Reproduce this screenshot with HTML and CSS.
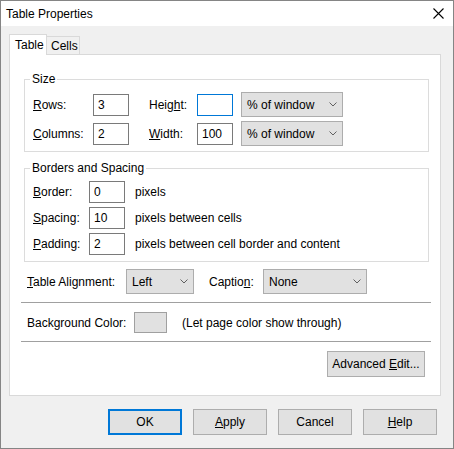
FILE: index.html
```html
<!DOCTYPE html>
<html>
<head>
<meta charset="utf-8">
<link rel="stylesheet" href="styles.css">
</head>
<body>
<div class="window">
  <div class="titlebar">
    <span class="title">Table Properties</span>
    <span class="close"><svg width="11" height="11" viewBox="0 0 11 11"><path d="M0.5 0.5 L10.5 10.5 M10.5 0.5 L0.5 10.5" stroke="#000" stroke-width="1.1" fill="none"/></svg></span>
  </div>
  <div class="body">
    <div class="tabs">
      <div class="tab active">Table</div>
      <div class="tab">Cells</div>
    </div>
    <div class="panel">
      <fieldset class="group g-size">
        <legend>Size</legend>
        <div class="size-row">
          <span class="lbl"><u>R</u>ows:</span>
          <input class="num" value="3">
          <span></span>
          <span class="lbl">Heig<u>h</u>t:</span>
          <input class="num focus" value="">
          <span></span>
          <div class="combo"><span>% of window</span><svg class="chev" width="8" height="5" viewBox="0 0 8 5"><path d="M0.5 0.5 L4 4 L7.5 0.5" stroke="#606060" fill="none"/></svg></div>
        </div>
        <div class="size-row">
          <span class="lbl"><u>C</u>olumns:</span>
          <input class="num" value="2">
          <span></span>
          <span class="lbl"><u>W</u>idth:</span>
          <input class="num" value="100">
          <span></span>
          <div class="combo"><span>% of window</span><svg class="chev" width="8" height="5" viewBox="0 0 8 5"><path d="M0.5 0.5 L4 4 L7.5 0.5" stroke="#606060" fill="none"/></svg></div>
        </div>
      </fieldset>
      <fieldset class="group g-borders">
        <legend>Borders and Spacing</legend>
        <div class="b-row">
          <span class="lbl"><u>B</u>order:</span>
          <input class="num" value="0">
          <span class="desc">pixels</span>
        </div>
        <div class="b-row">
          <span class="lbl"><u>S</u>pacing:</span>
          <input class="num" value="10">
          <span class="desc">pixels between cells</span>
        </div>
        <div class="b-row">
          <span class="lbl"><u>P</u>adding:</span>
          <input class="num" value="2">
          <span class="desc">pixels between cell border and content</span>
        </div>
      </fieldset>
      <div class="align-row">
        <span class="lbl"><u>T</u>able Alignment:</span>
        <div class="combo"><span>Left</span><svg class="chev" width="8" height="5" viewBox="0 0 8 5"><path d="M0.5 0.5 L4 4 L7.5 0.5" stroke="#606060" fill="none"/></svg></div>
        <span></span>
        <span class="lbl">Captio<u>n</u>:</span>
        <div class="combo"><span>None</span><svg class="chev" width="8" height="5" viewBox="0 0 8 5"><path d="M0.5 0.5 L4 4 L7.5 0.5" stroke="#606060" fill="none"/></svg></div>
      </div>
      <div class="sep"></div>
      <div class="bg-row">
        <span class="lbl">Background Color:</span>
        <span class="swatch"></span>
        <span></span>
        <span class="desc">(Let page color show through)</span>
      </div>
      <div class="sep sep2"></div>
      <div class="adv-row">
        <button class="btn adv">Advanced <u>E</u>dit...</button>
      </div>
    </div>
    <div class="buttons">
      <button class="btn default">OK</button>
      <button class="btn"><u>A</u>pply</button>
      <button class="btn">Cancel</button>
      <button class="btn"><u>H</u>elp</button>
    </div>
  </div>
</div>
</body>
</html>
```
FILE: styles.css
```css
html, body {
  margin: 0;
  padding: 0;
  background: #ffffff;
}
body {
  font-family: "Liberation Sans", Arial, sans-serif;
  font-size: 12px;
  color: #000;
}
.window {
  width: 454px;
  height: 449px;
  box-sizing: border-box;
  border: 1px solid #858585;
  background: #f0f0f0;
  display: flex;
  flex-direction: column;
}
.titlebar {
  height: 25px;
  background: #fff;
  display: flex;
  align-items: center;
  justify-content: space-between;
  padding-left: 5px;
  flex: none;
}
.close {
  width: 30px;
  height: 25px;
  display: flex;
  align-items: center;
  justify-content: center;
}
.body {
  flex: 1;
  padding: 8px 12px 0 8px;
}
.tabs {
  display: flex;
  align-items: flex-end;
  height: 20px;
}
.tab {
  box-sizing: border-box;
  height: 18px;
  width: 33px;
  border-top: 1px solid #d9d9d9;
  border-right: 1px solid #d9d9d9;
  background: #f0f0f0;
  display: flex;
  align-items: center;
  padding-left: 4px;
}
.tab.active {
  position: relative;
  z-index: 1;
  height: 21px;
  width: 38px;
  margin-bottom: -1px;
  border-left: 1px solid #d9d9d9;
  background: #fff;
  padding-left: 5px;
}
.panel {
  box-sizing: border-box;
  height: 342px;
  background: #fff;
  border: 1px solid #d9d9d9;
  display: flex;
  flex-direction: column;
}
.group {
  margin: 0 11px 0 14px;
  border: 1px solid #dcdcdc;
  padding: 5px 8px 5px 8px;
  min-width: 0;
}
.group legend {
  padding: 0 2px;
  margin-left: -3px;
  line-height: 16px;
}
.g-size {
  margin-top: 16px;
}
.g-borders {
  margin-top: 8px;
  padding-bottom: 6px;
}
.size-row {
  display: grid;
  grid-template-columns: 60px 36px 20px 48px 36px 8px 102px;
  height: 25px;
  align-items: center;
}
.size-row + .size-row {
  margin-top: 4px;
}
.b-row {
  display: grid;
  grid-template-columns: 56px 36px 10px auto;
  height: 22px;
  align-items: center;
}
.b-row .desc {
  grid-column: 4;
}
.b-row + .b-row {
  margin-top: 4px;
}
.num {
  box-sizing: border-box;
  width: 36px;
  height: 22px;
  border: 1px solid #7a7a7a;
  background: #fff;
  font: inherit;
  color: #000;
  padding: 0 0 0 4px;
  margin: 0;
  outline: none;
}
.num.focus {
  border-color: #0078d7;
}
.combo {
  box-sizing: border-box;
  height: 25px;
  border: 1px solid #adadad;
  background: #e1e1e1;
  display: flex;
  align-items: center;
  justify-content: space-between;
  padding: 0 5px 0 5px;
}
.chev {
  display: block;
}
.align-row {
  display: grid;
  grid-template-columns: 99px 68px 15px 54px 104px;
  height: 25px;
  align-items: center;
  margin: 7px 0 0 17px;
}
.sep {
  height: 1px;
  background: #a0a0a0;
  margin: 8px 9px 0 11px;
}
.bg-row {
  display: grid;
  grid-template-columns: 107px 33px 15px auto;
  height: 21px;
  align-items: center;
  margin: 9px 0 0 17px;
}
.swatch {
  box-sizing: border-box;
  height: 21px;
  border: 1px solid #a0a0a0;
  background: #e1e1e1;
}
.adv-row {
  display: flex;
  justify-content: flex-end;
  margin: 9px 15px 0 0;
}
.btn {
  box-sizing: border-box;
  height: 26px;
  width: 74px;
  border: 1px solid #adadad;
  background: #e1e1e1;
  font: inherit;
  color: #000;
  padding: 0;
  margin: 0;
}
.btn.adv {
  width: 98px;
}
.btn.default {
  border: 2px solid #0078d7;
}
.buttons {
  display: flex;
  justify-content: flex-end;
  gap: 11px;
  margin-top: 13px;
  padding-right: 4px;
}
```
